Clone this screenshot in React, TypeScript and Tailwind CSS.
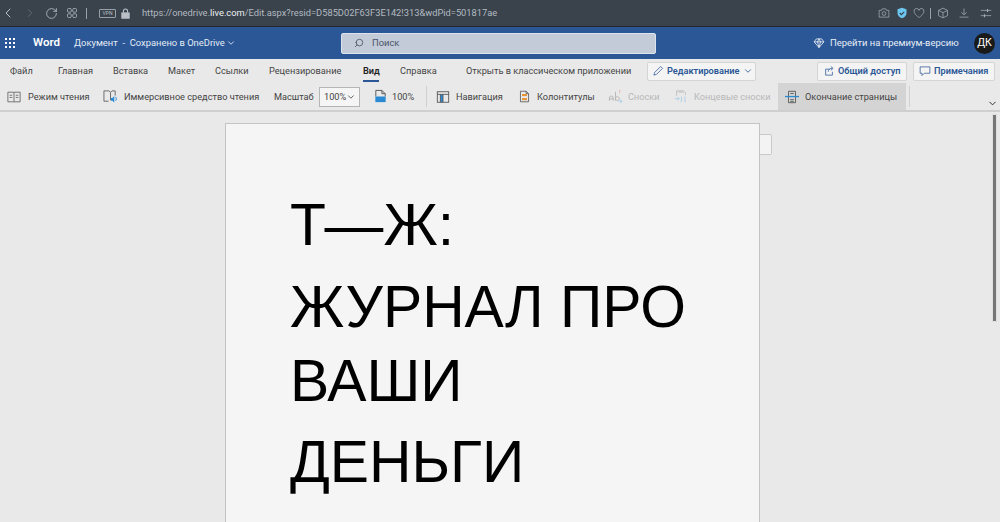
import { ChevronDown, ChevronLeft, ChevronRight, RotateCw, Search } from "lucide-react"

const ui = "font-['Roboto',sans-serif]"

function Icon({ className, children }: { className?: string; children: React.ReactNode }) {
  return (
    <svg viewBox="0 0 16 16" fill="none" stroke="currentColor" strokeWidth="1" className={className}>
      {children}
    </svg>
  )
}

function BrowserBar() {
  return (
    <div className="flex h-[27px] shrink-0 items-center border-b border-[#22282e] bg-[#3a434c] text-[#b9bfc5]">
      <ChevronLeft className="h-[16px] w-[16px]" strokeWidth={1.5} />
      <ChevronRight className="ml-[7px] h-[14px] w-[14px] text-[#656d75]" strokeWidth={1.5} />
      <RotateCw className="ml-[8px] h-[13px] w-[13px]" strokeWidth={1.5} />
      <Icon className="ml-[8px] h-[12px] w-[12px]">
        <rect x="2" y="2" width="5" height="5" rx="1.5" />
        <rect x="9" y="2" width="5" height="5" rx="1.5" />
        <rect x="2" y="9" width="5" height="5" rx="1.5" />
        <rect x="9" y="9" width="5" height="5" rx="1.5" />
      </Icon>
      <div className="ml-[8px] h-[11px] w-px bg-[#98a0a8]" />
      <div className="ml-[12px] flex h-[9px] w-[17px] items-center justify-center rounded-[1px] border border-[#98a0a8] text-[5px] leading-none">
        VPN
      </div>
      <Icon className="ml-[4px] h-[11px] w-[11px]">
        <rect x="2.5" y="7" width="11" height="8" fill="currentColor" />
        <path d="M5 7V4.500a3 3 0 0 1 6 0V7" strokeWidth="1.6" />
      </Icon>
      <div className="ml-[11px] text-[9.300px] text-[#b3bac1]">
        https://onedrive.<span className="text-[#eef0f2]">live.com</span>/Edit.aspx?resid=D585D02F63F3E142!313&amp;wdPid=501817ae
      </div>
      <div className="ml-auto flex items-center text-[#a5acb3]">
        <Icon className="h-[12px] w-[12px]">
          <path d="M1.500 4.500h3l1-2h5l1 2h3v9h-13z" />
          <circle cx="8" cy="8.700" r="2.500" />
        </Icon>
        <svg viewBox="0 0 16 16" className="ml-[6px] h-[12px] w-[12px]">
          <path d="M8 1l6 2v5c0 3.500-2.500 6-6 7-3.500-1-6-3.500-6-7V3z" fill="#6cc6ef" />
          <path d="M5 8l2.200 2.200L11 6.500" stroke="#33414d" strokeWidth="1.500" fill="none" />
        </svg>
        <Icon className="ml-[5px] h-[12px] w-[12px]">
          <path d="M8 14S1.500 10 1.500 5.500A3.300 3.300 0 0 1 8 4.500a3.300 3.300 0 0 1 6.500 1C14.500 10 8 14 8 14z" />
        </Icon>
        <div className="ml-[5px] h-[11px] w-px bg-[#98a0a8]" />
        <Icon className="ml-[6px] h-[12px] w-[12px]">
          <path d="M8 1.500l6 3v7l-6 3-6-3v-7zM2 4.500l6 3 6-3M8 7.500v7" />
        </Icon>
        <Icon className="ml-[9px] h-[12px] w-[12px]">
          <path d="M8 2v8M4.500 7L8 10.500 11.500 7M2 13.500h12" />
        </Icon>
        <Icon className="ml-[10px] mr-[8px] h-[12px] w-[12px]">
          <path d="M1 4.500h14M1 11.500h14" />
          <path d="M10 2.500v4M6 9.500v4" strokeWidth="1.500" />
        </Icon>
      </div>
    </div>
  )
}

function WordBar() {
  return (
    <div className="flex h-[32px] shrink-0 items-center bg-[#2b5796] text-white">
      <div className="ml-[5px] grid grid-cols-3 gap-[2px]">
        {Array.from({ length: 9 }).map((_, i) => (
          <div key={i} className="h-[2px] w-[2px] bg-white" />
        ))}
      </div>
      <div className="ml-[18px] w-[41px] text-[11.5px] font-semibold">Word</div>
      <div className="w-[152px] text-[9.400px] text-[#e4ebf5]">Документ&nbsp; -&nbsp; Сохранено в OneDrive</div>
      <ChevronDown className="h-[10px] w-[10px] text-[#e4ebf5]" />
      <div className="ml-[105px] flex h-[21px] w-[315px] items-center rounded-[2px] border border-[#dce3ec] bg-[#c3cbd8] pl-[12px] text-[9.400px] text-[#4a5568]">
        <Search className="h-[10px] w-[10px] -scale-x-100" />
        <span className="ml-[8px]">Поиск</span>
      </div>
      <svg viewBox="0 0 16 16" fill="none" stroke="currentColor" className="ml-[157px] h-[12px] w-[12px]">
        <path d="M4.500 2.500h7l3 4L8 14 1.500 6.500zM1.500 6.500h13M6 6.500L8 14l2-7.500M6 6.500l2-4 2 4" />
      </svg>
      <div className="ml-[5px] w-[144px] text-[9.450px] text-[#e8eef6]">Перейти на премиум-версию</div>
      <div className="flex h-[21px] w-[21px] items-center justify-center rounded-full bg-[#1a1a1a] text-[10.5px]">
        ДК
      </div>
    </div>
  )
}

function TabsRow() {
  const tabs = [
    { label: "Файл", w: "w-[48px]" },
    { label: "Главная", w: "w-[55px]" },
    { label: "Вставка", w: "w-[55px]" },
    { label: "Макет", w: "w-[47px]" },
    { label: "Ссылки", w: "w-[54px]" },
    { label: "Рецензирование", w: "w-[94px]" },
    { label: "Вид", w: "w-[37px]", active: true },
    { label: "Справка", w: "w-[66px]" },
  ]
  return (
    <div className="flex h-[24px] items-center pl-[10px] text-[9.200px] text-[#444]">
      {tabs.map((t) => (
        <div key={t.label} className={`relative ${t.w} ${t.active ? "font-semibold text-[#222]" : ""}`}>
          {t.label}
          {t.active && <div className="absolute top-[16px] left-0 h-[2px] w-[16px] bg-[#2b5796]" />}
        </div>
      ))}
      <div className="w-[181px]">Открыть в классическом приложении</div>
      <button className="flex h-[19px] w-[109px] items-center rounded-[2px] border border-[#d5d5d5] bg-[#f4f4f4] pl-[4px] font-semibold text-[#2b5796]">
        <Icon className="h-[12px] w-[12px]">
          <path d="M2.500 13.500l1-3.500 8-8 2.500 2.500-8 8z" />
        </Icon>
        <span className="ml-[3px]">Редактирование</span>
        <ChevronDown className="ml-[4px] h-[10px] w-[10px]" />
      </button>
      <button className="ml-[61px] flex h-[19px] w-[90px] items-center rounded-[2px] border border-[#d5d5d5] bg-[#f4f4f4] pl-[5px] font-semibold text-[#2b5796]">
        <Icon className="h-[12px] w-[12px]">
          <path d="M9 5.500H3.500v8h9V9M7 9c0-3 2-4.500 5-4.500M10.500 2l3 2.500-3 2.500" />
        </Icon>
        <span className="ml-[3px]">Общий доступ</span>
      </button>
      <button className="ml-[6px] flex h-[19px] w-[82px] items-center rounded-[2px] border border-[#d5d5d5] bg-[#f4f4f4] pl-[5px] font-semibold text-[#2b5796]">
        <Icon className="h-[12px] w-[12px]">
          <path d="M1.500 2.500h13v8.500H7l-3 3v-3H1.500z" />
        </Icon>
        <span className="ml-[3px]">Примечания</span>
      </button>
    </div>
  )
}

function Toolbar() {
  return (
    <div className="relative flex h-[27px] items-center pl-[7px] text-[9.200px] text-[#444]">
      <Icon className="h-[14px] w-[14px] text-[#666]">
        <path d="M1 2.500h6.500l.5 1 .5-1H15v11H8.500l-.5.500-.5-.500H1zM8 3.500v10M3 6h3M3 8.500h3M10 6h3M10 8.500h3" />
      </Icon>
      <span className="ml-[7px] w-[61px]">Режим чтения</span>
      <svg viewBox="0 0 16 16" fill="none" className="ml-[14px] h-[15px] w-[15px]">
        <path d="M1 2h5.500L8 3.500 9.500 2H13v5M8 3.500V12M6 13H1V2" stroke="#666" />
        <path d="M8.500 9.500h1.500L12 7.500v7L10 12.500H8.500z" fill="#2a8ad4" />
        <path d="M13.500 8.500a3 3 0 0 1 0 4" stroke="#2a8ad4" />
      </svg>
      <span className="ml-[6px] w-[135px]">Иммерсивное средство чтения</span>
      <span className="ml-[15px] w-[40px]">Масштаб</span>
      <div className="ml-[5px] flex h-[20px] w-[41px] items-center border border-[#b5b5b5] bg-[#f5f5f5] pl-[4px]">
        100%
        <ChevronDown className="ml-auto mr-[3px] h-[10px] w-[10px]" />
      </div>
      <svg viewBox="0 0 16 16" fill="none" className="ml-[13px] h-[15px] w-[15px]">
        <path d="M3 8V1.500h6.500L13 5v3M9.500 1.500V5H13" stroke="#555" />
        <rect x="2.500" y="8" width="11" height="6" fill="#2a8ad4" />
      </svg>
      <span className="ml-[4px] w-[25px]">100%</span>
      <div className="ml-[9px] h-[21px] w-px bg-[#d0d0d0]" />
      <svg viewBox="0 0 16 16" fill="none" className="ml-[9px] h-[14px] w-[14px]">
        <rect x="5" y="5" width="3" height="9" fill="#2a8ad4" />
        <rect x="1.500" y="2" width="13" height="12" stroke="#555" />
        <path d="M1.500 5h13M8 5v9M5 5v9" stroke="#555" />
      </svg>
      <span className="ml-[6px] w-[46px]">Навигация</span>
      <svg viewBox="0 0 16 16" fill="none" className="ml-[16px] h-[15px] w-[13px]">
        <path d="M3 1.500h7L13 4.500v10H3zM10 1.500v3h3" stroke="#555" />
        <rect x="5" y="5" width="6" height="2.500" fill="#e8912d" />
        <rect x="5" y="10" width="6" height="2.500" fill="#e8912d" />
      </svg>
      <span className="ml-[6px] w-[56px]">Колонтитулы</span>
      <svg viewBox="0 0 16 16" fill="none" className="ml-[15px] h-[15px] w-[15px] text-[#b5b5b5]">
        <path d="M1.500 12.500V9.500a2 2 0 0 1 4 0v3M1.500 10.500h4M8 3v9.500M8 10a2 2 0 1 1 0 .5" stroke="currentColor" />
        <path d="M11 13h4M13 11l2 2-2 2" stroke="#a9cfe9" />
        <path d="M12.500 1v3" stroke="#e8b0b0" />
      </svg>
      <span className="ml-[5px] w-[31px] text-[#b8b8b8]">Сноски</span>
      <svg viewBox="0 0 16 16" fill="none" className="ml-[15px] h-[15px] w-[14px]">
        <path d="M3 7V1.500h8L13 3.500v3M5 3h6" stroke="#bbb" />
        <path d="M1 10.500h5M4 8.500l2 2-2 2M8.500 8v6h-1M12.500 8v6h1" stroke="#a9cfe9" />
      </svg>
      <span className="ml-[6px] w-[76px] text-[#b8b8b8]">Концевые сноски</span>
      <div className="ml-[8px] flex h-[27px] w-[128px] items-center bg-[#d4d4d4] pl-[7px]">
        <svg viewBox="0 0 16 16" fill="none" className="h-[14px] w-[14px]">
          <path d="M4 1.500h8v13H4zM6 4h4M6 11h4M6 13h4" stroke="#555" />
          <path d="M0 7.500h16" stroke="#2a8ad4" strokeWidth="1.500" />
        </svg>
        <span className="ml-[6px]">Окончание страницы</span>
      </div>
      <div className="ml-[3px] h-[21px] w-px bg-[#d0d0d0]" />
      <ChevronDown className="absolute right-[2px] bottom-[1px] h-[11px] w-[11px] text-[#222]" strokeWidth={2} />
    </div>
  )
}

export default function App() {
  return (
    <div className={`flex h-[522px] w-[1000px] flex-col overflow-hidden whitespace-nowrap bg-[#e9e9e9] ${ui}`}>
      <BrowserBar />
      <WordBar />
      <div className="shrink-0 border-b-2 border-[#cfcfcf] bg-[#e9e9e9]">
        <TabsRow />
        <Toolbar />
      </div>
      <div className="relative flex min-h-0 flex-1 pt-[11px] pl-[225px]">
        <div className="h-[500px] w-[535px] border border-b-0 border-[#c4c4c4] bg-[#f5f5f5] pt-[61px] pl-[64px] font-['Liberation_Sans',sans-serif] text-[58.800px] leading-[80px] text-black">
          <div>Т—Ж:</div>
          <div className="mt-[2px]">ЖУРНАЛ ПРО</div>
          <div className="-mt-[6px]">ВАШИ</div>
          <div className="mt-[1px]">ДЕНЬГИ</div>
        </div>
        <div className="mt-[11px] h-[21px] w-[12px] rounded-r-[2px] border border-l-0 border-[#c9c9c9] bg-[#f3f3f3]" />
        <div className="absolute top-[2px] right-[3px] h-[208px] w-[5px] rounded-[1px] border border-[#e0e0e0] bg-[#777]" />
      </div>
    </div>
  )
}
